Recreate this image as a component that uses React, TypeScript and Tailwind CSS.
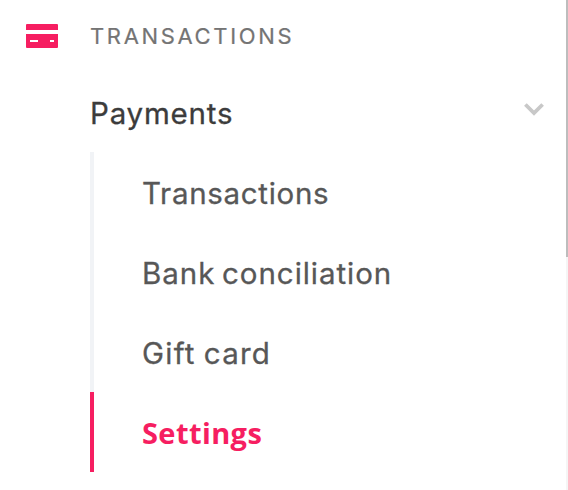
const items = [
  { label: "Transactions", spacing: "tracking-[0.7px]" },
  { label: "Bank conciliation", spacing: "tracking-[0.95px] [word-spacing:-2.5px]" },
  { label: "Gift card", spacing: "tracking-[1.25px] [word-spacing:-1.5px]" },
];

function CardIcon() {
  return (
    <svg width="32" height="24" viewBox="0 0 32 24" fill="#f61e61" className="block shrink-0" aria-hidden="true">
      <path d="M0 6V1a1 1 0 0 1 1-1h30a1 1 0 0 1 1 1v5z" />
      <path fillRule="evenodd" d="M0 10h32v13a1 1 0 0 1-1 1H1a1 1 0 0 1-1-1zm4 6v2h8v-2zm20 0v2h4v-2z" />
    </svg>
  );
}

export default function App() {
  return (
    <div className="flex h-[490px] w-[568px] overflow-hidden bg-white font-['Inter',sans-serif]">
      <nav className="w-[566px] shrink-0">
        <header className="flex h-[72px] items-center pl-[26px]">
          <CardIcon />
          <h2 className="ml-[32px] whitespace-nowrap text-[22px] leading-[30px] tracking-[2.65px] text-[#747474] [-webkit-text-stroke:0.2px]">TRANSACTIONS</h2>
        </header>
        <button className="flex h-20 w-full items-center justify-between pr-[22px] pl-[90px] text-[29.5px] text-[#3c3c3c]">
          <span className="pt-[3px] whitespace-nowrap tracking-[0.8px] [-webkit-text-stroke:0.3px]">Payments</span>
          <svg width="20" height="13" viewBox="0 0 20 13" fill="none" stroke="#c8c8c8" strokeWidth="3.8" className="mb-[6px]" aria-hidden="true">
            <path d="M1.4 1.5L10 10L18.6 1.5" />
          </svg>
        </button>
        <ul className="ml-[90px] text-[29.5px] text-[#575757]">
          {items.map((item) => (
            <li key={item.label} className="flex h-20 items-center border-l-4 border-[#f1f3f6] pt-[3px] pl-[48px]">
              <span className={"whitespace-nowrap [-webkit-text-stroke:0.3px] " + item.spacing}>{item.label}</span>
            </li>
          ))}
          <li className="flex h-20 items-center border-l-4 border-[#f61e61] pt-px pl-[48px] text-[29px] font-['Open_Sans',sans-serif] font-bold text-[#f61e61]">
            <span className="whitespace-nowrap tracking-[0.4px]">Settings</span>
          </li>
        </ul>
      </nav>
      <div className="w-0.5 bg-[#f5f5f5]">
        <div className="h-[257px] bg-[#bdbdbd]" />
      </div>
    </div>
  );
}
